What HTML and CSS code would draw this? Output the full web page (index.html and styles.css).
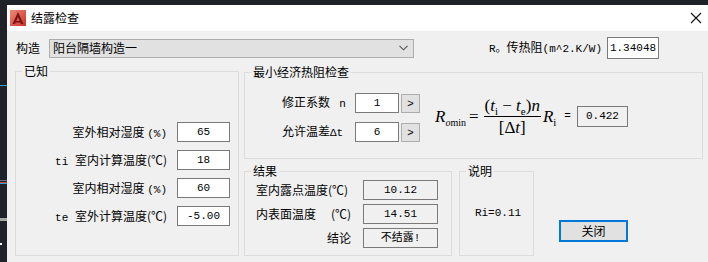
FILE: index.html
```html
<!DOCTYPE html>
<html lang="zh-CN">
<head>
    <meta charset="UTF-8">
    <meta name="viewport" content="width=device-width, initial-scale=1.0">
    <title>结露检查</title>
    <link rel="stylesheet" href="styles.css">
</head>
<body>
<div class="screen">
    <div class="desk"></div>
    <div class="window">
        <div class="titlebar">
            <svg class="app-icon" width="16" height="16" viewBox="0 0 16 16">
                <defs>
                    <linearGradient id="ig" x1="0" y1="0" x2="1" y2="1">
                        <stop offset="0" stop-color="#f08a78"/>
                        <stop offset="1" stop-color="#c8322a"/>
                    </linearGradient>
                </defs>
                <rect width="16" height="16" fill="url(#ig)"/>
                <path d="M8 2 L13.5 14 L11 14 L8 7 L5 14 L2.5 14 Z" fill="#7a1414"/>
                <path d="M6 11 L10 11 L10.6 12.5 L5.4 12.5 Z" fill="#7a1414"/>
            </svg>
            <span class="title">结露检查</span>
            <svg class="close-x" width="12" height="12" viewBox="0 0 12 12">
                <path d="M1 1 L11 11 M11 1 L1 11" stroke="#111" stroke-width="1.1"/>
            </svg>
        </div>
        <div class="dialog">
            <div class="construct-row">
                <span class="construct-label">构造</span>
                <div class="combo">
                    <span>阳台隔墙构造一</span>
                    <svg width="9" height="6" viewBox="0 0 9 6">
                        <path d="M0.5 0.8 L4.5 4.8 L8.5 0.8" fill="none" stroke="#555" stroke-width="1.1"/>
                    </svg>
                </div>
                <span class="ro-label"><span class="mono">R。</span>传热阻<span class="mono">(m^2.K/W)</span></span>
                <span class="field ro-value">1.34048</span>
            </div>

            <div class="main">
                <fieldset class="group known">
                    <legend>已知</legend>
                    <div class="known-grid">
                        <span class="label">室外相对湿度 <span class="mono">(%)</span></span>
                        <span class="field">65</span>
                        <span class="label"><span class="mono">ti </span>室内计算温度(℃)</span>
                        <span class="field">18</span>
                        <span class="label">室内相对湿度 <span class="mono">(%)</span></span>
                        <span class="field">60</span>
                        <span class="label"><span class="mono">te </span>室外计算温度(℃)</span>
                        <span class="field">-5.00</span>
                    </div>
                </fieldset>

                <div class="right-col">
                    <fieldset class="group check">
                        <legend>最小经济热阻检查</legend>
                        <div class="check-body">
                            <div class="check-rows">
                                <div class="check-row">
                                    <span class="check-label">修正系数 <span class="mono">&nbsp;n</span></span>
                                    <span class="field small">1</span>
                                    <span class="step">&gt;</span>
                                </div>
                                <div class="check-row">
                                    <span class="check-label">允许温差<span class="mono">Δt</span></span>
                                    <span class="field small">6</span>
                                    <span class="step">&gt;</span>
                                </div>
                            </div>
                            <div class="formula">
                                <span class="term"><i>R</i><sub class="tiny"><i>o</i>min</sub></span>
                                <span class="eq">=</span>
                                <span class="frac">
                                    <span class="num">(<i>t</i><sub>i</sub> − <i>t</i><sub>e</sub>)<i>n</i></span>
                                    <span class="den">[Δ<i>t</i>]</span>
                                </span>
                                <span class="term ri"><i>R</i><sub>i</sub></span>
                                <span class="eq-small">=</span>
                                <span class="field result-box">0.422</span>
                            </div>
                        </div>
                    </fieldset>

                    <div class="bottom-row">
                        <fieldset class="group result">
                            <legend>结果</legend>
                            <div class="result-grid">
                                <span>室内露点温度(℃)</span>
                                <span class="field out">10.12</span>
                                <span class="spread"><span>内表面温度</span><span>(℃)</span></span>
                                <span class="field out">14.51</span>
                                <span class="right">结论</span>
                                <span class="field out">不结露!</span>
                            </div>
                        </fieldset>
                        <fieldset class="group note">
                            <legend>说明</legend>
                            <div class="note-text">Ri=0.11</div>
                        </fieldset>
                        <button class="close-btn">关闭</button>
                    </div>
                </div>
            </div>
        </div>
    </div>
</div>
</body>
</html>
```

FILE: styles.css
```css
* {
    box-sizing: border-box;
    margin: 0;
    padding: 0;
}

body {
    background-color: #1f2329;
    font-family: "Noto Sans CJK SC", "Liberation Sans", sans-serif;
    font-size: 12px;
    color: #000;
    overflow: hidden;
}

.screen {
    display: flex;
    width: 708px;
    height: 262px;
}

/* dark desktop strip on the left */
.desk {
    width: 7px;
    background:
        linear-gradient(#2aa3d4, #2aa3d4) 0 85px / 7px 1px no-repeat,
        linear-gradient(#6b7178, #6b7178) 0 180px / 7px 1px no-repeat,
        linear-gradient(#d0404a, #d0404a) 0 182px / 7px 1px no-repeat,
        linear-gradient(#2aa3d4, #2aa3d4) 0 183px / 7px 1px no-repeat,
        linear-gradient(#a8a8a8, #a8a8a8) 0 218px / 7px 3px no-repeat,
        linear-gradient(#ffffff, #ffffff) 0 243px / 2px 2px no-repeat,
        #1f2329;
}

.window {
    flex: 1;
    margin-top: 5px;
    display: flex;
    flex-direction: column;
}

.titlebar {
    height: 26px;
    background-color: #fff;
    display: flex;
    align-items: center;
    padding-left: 3px;
    padding-right: 6px;
}

.app-icon {
    display: block;
}

.title {
    margin-left: 5px;
    line-height: 16px;
}

.close-x {
    margin-left: auto;
}

.dialog {
    flex: 1;
    background-color: #f0f0f0;
    padding-left: 8px;
}

.mono {
    font-family: "Liberation Mono", "Noto Sans CJK SC", monospace;
    font-size: 11px;
}

.construct-row {
    display: flex;
    align-items: center;
    height: 22px;
    margin-top: 6px;
    padding-right: 49px;
}

.construct-label {
    margin-left: 1px;
    width: 24px;
    line-height: 16px;
}

.combo {
    margin-left: 9px;
    width: 365px;
    height: 19px;
    background-color: #e1e1e1;
    border: 1px solid #adadad;
    display: flex;
    align-items: center;
    justify-content: space-between;
    padding: 0 5px 0 3px;
    line-height: 16px;
}

.combo svg {
    display: block;
}

.ro-label {
    margin-left: auto;
    margin-right: 5px;
    line-height: 16px;
}

.field {
    display: flex;
    align-items: center;
    justify-content: center;
    height: 20px;
    background-color: #fff;
    border: 1px solid #7a7a7a;
    font-family: "Liberation Mono", "Noto Sans CJK SC", monospace;
    font-size: 11px;
}

.ro-value {
    width: 52px;
    height: 22px;
}

.main {
    display: grid;
    grid-template-columns: 224px 459px;
    column-gap: 5px;
    margin-top: 4px;
}

.group {
    border: 1px solid #dcdcdc;
    min-width: 0;
}

.group legend {
    margin-left: 6px;
    padding: 0 2px;
    line-height: 16px;
}

.known {
    height: 193px;
}

.known-grid {
    display: grid;
    grid-template-columns: 151px 53px;
    column-gap: 10px;
    row-gap: 6px;
    padding-top: 43px;
}

.label {
    text-align: right;
    line-height: 20px;
    white-space: nowrap;
}

.right-col {
    display: flex;
    flex-direction: column;
    margin-top: 1px;
}

.check {
    height: 95px;
}

.check-body {
    display: flex;
    align-items: center;
    padding: 12px 0 0 37px;
}

.check-rows {
    display: flex;
    flex-direction: column;
    gap: 7px;
}

.check-row {
    display: flex;
    align-items: center;
}

.check-label {
    width: 66px;
    margin-right: 7px;
    line-height: 20px;
    white-space: nowrap;
}

.field.small {
    width: 44px;
}

.step {
    width: 19px;
    height: 19px;
    margin-left: 2px;
    background-color: #e1e1e1;
    border: 1px solid #adadad;
    display: flex;
    align-items: center;
    justify-content: center;
    font-family: "Liberation Sans", sans-serif;
    font-size: 11px;
}

.formula {
    display: flex;
    align-items: center;
    margin-left: 15px;
    margin-top: -3px;
    font-family: "Liberation Serif", serif;
    font-size: 17px;
    line-height: 1;
}

.formula sub {
    font-size: 11px;
    line-height: 0;
    vertical-align: -4px;
}

.formula sub.tiny {
    font-size: 10px;
    vertical-align: -4px;
}

.term {
    white-space: nowrap;
}

.formula i {
    font-style: italic;
}

.eq {
    margin: 0 5px 0 3px;
}

.frac {
    display: inline-flex;
    flex-direction: column;
    align-items: center;
}

.num {
    padding: 0 1px 2px;
    border-bottom: 1px solid #000;
}

.den {
    padding-top: 2px;
}

.ri {
    margin-left: 2px;
}

.eq-small {
    margin: 0 6px 0 8px;
    font-family: "Liberation Mono", monospace;
    font-size: 11px;
}

.result-box {
    width: 51px;
    height: 21px;
    background-color: #f0f0f0;
}

.bottom-row {
    display: flex;
    margin-top: 4px;
}

.result {
    width: 208px;
    height: 93px;
}

.result-grid {
    display: grid;
    grid-template-columns: 95px 75px;
    column-gap: 12px;
    row-gap: 4px;
    line-height: 20px;
    padding: 1px 0 0 11px;
}

.spread {
    display: flex;
    justify-content: space-between;
}

.right {
    text-align: right;
}

.field.out {
    background-color: #f0f0f0;
    font-size: 11px;
}

.note {
    width: 75px;
    height: 93px;
    margin-left: 7px;
}

.note-text {
    text-align: center;
    font-family: "Liberation Mono", monospace;
    font-size: 11px;
    line-height: 16px;
    padding: 26px 0 0 3px;
}

.close-btn {
    align-self: flex-end;
    width: 69px;
    height: 22px;
    margin: 0 0 14px 25px;
    background-color: #e1e1e1;
    border: 2px solid #0078d7;
    font-family: "Noto Sans CJK SC", sans-serif;
    font-size: 12px;
    line-height: 16px;
    color: #000;
}
```
